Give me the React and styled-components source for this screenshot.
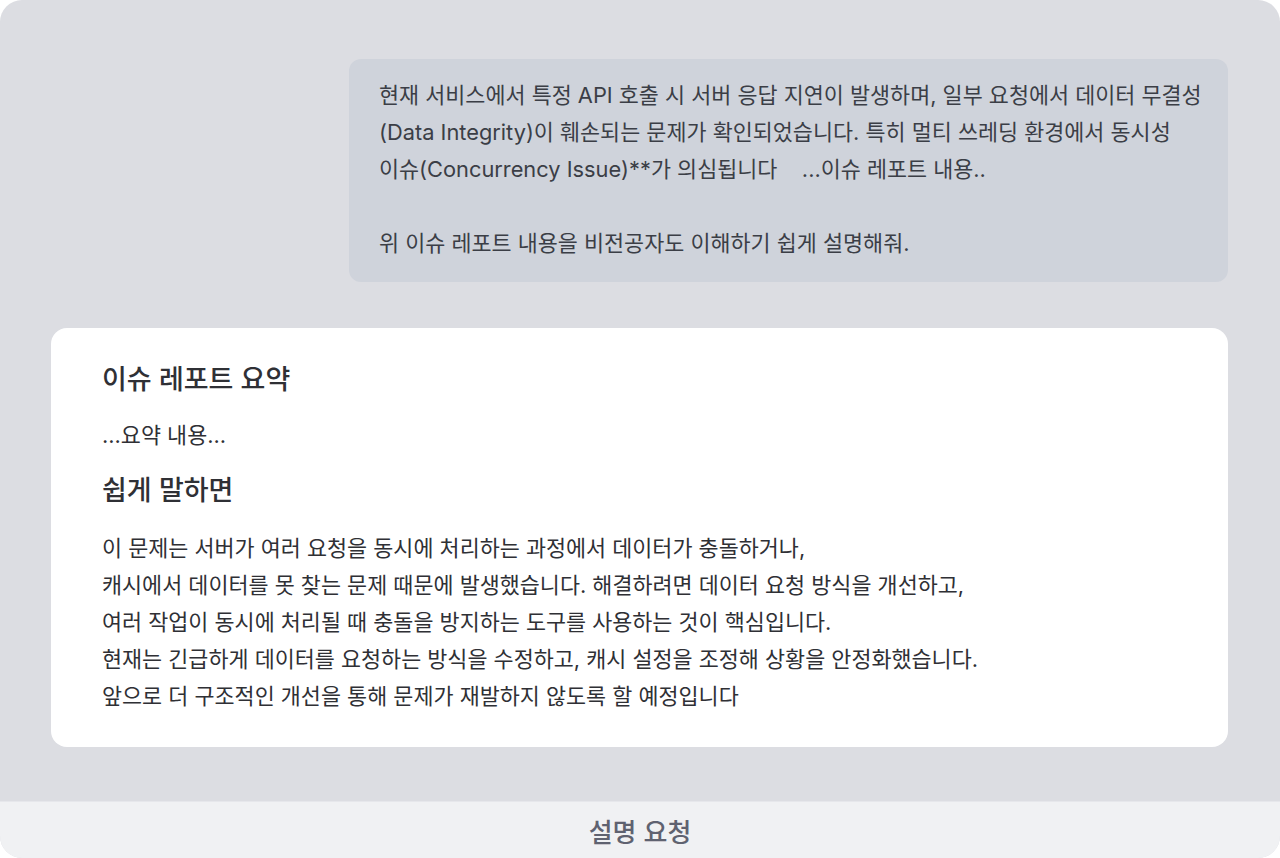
import styled, { createGlobalStyle } from 'styled-components';

const GlobalStyle = createGlobalStyle`
  html, body {
    margin: 0;
    padding: 0;
    background: #ffffff;
  }
  body {
    font-family: Inter, "Noto Sans CJK KR", sans-serif;
  }
`;

const Frame = styled.div`
  width: 1280px;
  height: 858px;
  display: flex;
  flex-direction: column;
  background-color: #dcdde2;
  border-radius: 22px;
  overflow: hidden;
`;

const Thread = styled.div`
  flex: 1;
  display: flex;
  flex-direction: column;
  padding: 59px 52px 0 51px;
  gap: 46px;
`;

const UserBubble = styled.div`
  align-self: flex-end;
  width: 879px;
  box-sizing: border-box;
  padding: 18px 30px 20px;
  background-color: #cfd3db;
  border-radius: 12px;
  color: #3b3e46;
  font-size: 21.8px;
  line-height: 37px;
  white-space: nowrap;
`;

const Blank = styled.div`
  height: 37px;
`;

const AnswerCard = styled.div`
  background-color: #ffffff;
  border-radius: 16px;
  padding: 34px 51px 32px;
  color: #2f3035;
`;

const Heading = styled.h3`
  margin: ${(p) => (p.$first ? '0' : '19px')} 0 0;
  font-size: 27px;
  font-weight: 500;
  line-height: 36px;
  color: #2f3035;
`;

const Summary = styled.p`
  margin: 19px 0 0;
  font-size: 21.8px;
  line-height: 37px;
`;

const Body = styled.p`
  margin: 21px 0 0;
  font-size: 21.8px;
  line-height: 37px;
`;

const RequestBar = styled.div`
  height: 57px;
  flex-shrink: 0;
  display: flex;
  align-items: center;
  justify-content: center;
  background-color: #f0f1f3;
  border-top: 1px solid #e6e7eb;
  box-sizing: border-box;
  color: #5f6270;
  font-size: 26px;
  font-weight: 500;
  cursor: pointer;
`;

const App = () => {
  return (
    <>
      <GlobalStyle />
      <Frame>
        <Thread>
          <UserBubble>
            현재 서비스에서 특정 API 호출 시 서버 응답 지연이 발생하며, 일부 요청에서 데이터 무결성
            <br />
            (Data Integrity)이 훼손되는 문제가 확인되었습니다. 특히 멀티 쓰레딩 환경에서 동시성
            <br />
            이슈(Concurrency Issue)**가 의심됩니다&nbsp;&nbsp;&nbsp;&nbsp;...이슈 레포트 내용..
            <Blank />
            위 이슈 레포트 내용을 비전공자도 이해하기 쉽게 설명해줘.
          </UserBubble>
          <AnswerCard>
            <Heading $first>이슈 레포트 요약</Heading>
            <Summary>...요약 내용...</Summary>
            <Heading>쉽게 말하면</Heading>
            <Body>
              이 문제는 서버가 여러 요청을 동시에 처리하는 과정에서 데이터가 충돌하거나,
              <br />
              캐시에서 데이터를 못 찾는 문제 때문에 발생했습니다. 해결하려면 데이터 요청 방식을 개선하고,
              <br />
              여러 작업이 동시에 처리될 때 충돌을 방지하는 도구를 사용하는 것이 핵심입니다.
              <br />
              현재는 긴급하게 데이터를 요청하는 방식을 수정하고, 캐시 설정을 조정해 상황을 안정화했습니다.
              <br />
              앞으로 더 구조적인 개선을 통해 문제가 재발하지 않도록 할 예정입니다
            </Body>
          </AnswerCard>
        </Thread>
        <RequestBar>설명 요청</RequestBar>
      </Frame>
    </>
  );
};

export default App;
